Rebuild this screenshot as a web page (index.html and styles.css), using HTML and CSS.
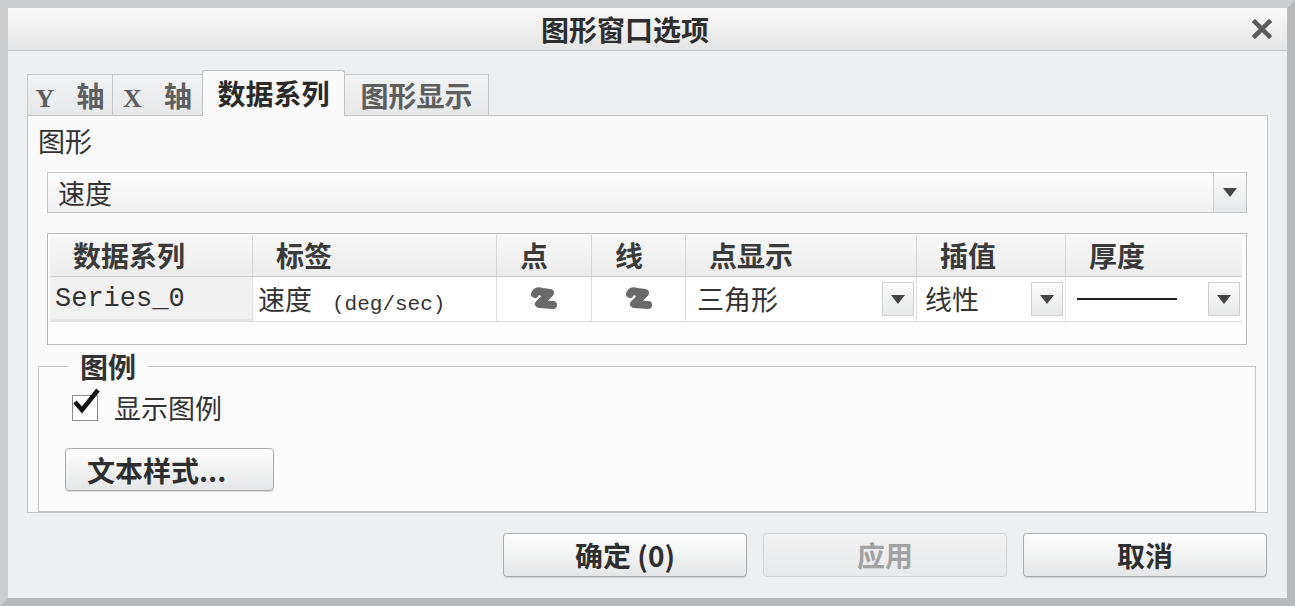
FILE: index.html
```html
<!DOCTYPE html>
<html lang="zh-CN">
<head>
    <meta charset="UTF-8">
    <title>图形窗口选项</title>
    <link rel="stylesheet" href="styles.css">
</head>
<body>
    <div class="dialog">
        <div class="titlebar">
            <span class="title">图形窗口选项</span>
            <span class="close">
                <svg width="20" height="20" viewBox="0 0 20 20"><path d="M3 3 L17 17 M17 3 L3 17" stroke="#5a5a5a" stroke-width="4.5" stroke-linecap="square"/></svg>
            </span>
        </div>

        <div class="dialog-body">
            <div class="tabs">
                <div class="tab tab-y"><span class="axis">Y</span>轴</div>
                <div class="tab tab-x"><span class="axis">X</span>轴</div>
                <div class="tab tab-active">数据系列</div>
                <div class="tab tab-graph">图形显示</div>
            </div>

            <div class="panel">
                <div class="field-label">图形</div>
                <div class="combo">
                    <span class="combo-text">速度</span>
                    <span class="arrow-btn"><svg width="14" height="9" viewBox="0 0 14 9"><path d="M0 0 L14 0 L7 9 Z" fill="#444"/></svg></span>
                </div>

                <div class="series-table">
                    <div class="row head">
                        <div class="cell">数据系列</div>
                        <div class="cell">标签</div>
                        <div class="cell">点</div>
                        <div class="cell">线</div>
                        <div class="cell">点显示</div>
                        <div class="cell">插值</div>
                        <div class="cell">厚度</div>
                    </div>
                    <div class="row data">
                        <div class="cell name mono">Series_0</div>
                        <div class="cell">速度<span class="mono unit">(deg/sec)</span></div>
                        <div class="cell swatch">
                            <svg width="30" height="24" viewBox="0 0 30 24"><path d="M6 7 Q8 3 13 5 L21 6 L10 17 L24 18" fill="none" stroke="#6a6a6a" stroke-width="8" stroke-linejoin="round" stroke-linecap="round"/></svg>
                        </div>
                        <div class="cell swatch">
                            <svg width="30" height="24" viewBox="0 0 30 24"><path d="M6 7 Q8 3 13 5 L21 6 L10 17 L24 18" fill="none" stroke="#6a6a6a" stroke-width="8" stroke-linejoin="round" stroke-linecap="round"/></svg>
                        </div>
                        <div class="cell pick">
                            <span class="pick-text">三角形</span>
                            <span class="arrow-btn small"><svg width="14" height="9" viewBox="0 0 14 9"><path d="M0 0 L14 0 L7 9 Z" fill="#444"/></svg></span>
                        </div>
                        <div class="cell pick pick-interp">
                            <span class="pick-text">线性</span>
                            <span class="arrow-btn small"><svg width="14" height="9" viewBox="0 0 14 9"><path d="M0 0 L14 0 L7 9 Z" fill="#444"/></svg></span>
                        </div>
                        <div class="cell pick pick-line">
                            <span class="thick-line"></span>
                            <span class="arrow-btn small"><svg width="14" height="9" viewBox="0 0 14 9"><path d="M0 0 L14 0 L7 9 Z" fill="#444"/></svg></span>
                        </div>
                    </div>
                </div>

                <fieldset class="legend-group">
                    <legend>图例</legend>
                    <label class="check">
                        <span class="check-box">
                            <svg width="32" height="30" viewBox="0 0 32 30"><path d="M5 15 L12 23 L28 3" fill="none" stroke="#111" stroke-width="4.5" stroke-linejoin="miter"/></svg>
                        </span>
                        显示图例
                    </label>
                    <button class="btn btn-style">文本样式...</button>
                </fieldset>
            </div>

            <div class="actions">
                <button class="btn btn-action">确定 (0)</button>
                <button class="btn btn-action" disabled>应用</button>
                <button class="btn btn-action">取消</button>
            </div>
        </div>
    </div>
</body>
</html>
```

FILE: styles.css
```css
body {
    margin: 0;
    padding: 0;
    font-family: "Noto Sans CJK SC", "Liberation Sans", sans-serif;
    color: #333;
    background-color: #c8cacc;
}

.dialog {
    width: 1295px;
    height: 606px;
    box-sizing: border-box;
    border: 8px solid #cbcdcf;
    border-right-color: #b8babc;
    border-bottom-color: #b8babc;
    display: flex;
    flex-direction: column;
    background-color: #eeeff0;
}

.titlebar {
    height: 42px;
    flex-shrink: 0;
    display: flex;
    align-items: center;
    justify-content: center;
    padding: 0 15px 0 0;
    background: linear-gradient(#fafafa, #e4e5e6);
    border-bottom: 1px solid #c2c3c4;
    position: relative;
}

.title {
    font-size: 28px;
    font-weight: bold;
    color: #2e2e2e;
    margin-right: 30px;
    line-height: 42px;
}

.close {
    position: absolute;
    right: 15px;
    top: 11px;
    width: 20px;
    height: 20px;
}

.dialog-body {
    flex: 1;
    display: flex;
    flex-direction: column;
    padding: 0 19px 0 19px;
}

.tabs {
    display: flex;
    align-items: flex-end;
    margin-top: 19px;
    height: 45px;
}

.tab {
    height: 41px;
    box-sizing: border-box;
    border: 1px solid #c6c7c8;
    border-bottom: none;
    border-left: none;
    background: linear-gradient(#f1f2f3, #e7e8e9);
    font-size: 28px;
    font-weight: bold;
    color: #5e5e5e;
    line-height: 40px;
    text-align: center;
}

.tab-y {
    width: 86px;
    border-left: 1px solid #c6c7c8;
}

.tab-x {
    width: 90px;
}

.axis {
    font-family: "Liberation Serif", serif;
    font-size: 26px;
    font-weight: bold;
    margin-right: 22px;
}

.tab-active {
    width: 143px;
    line-height: 44px;
    background: #fafafa;
    color: #2a2a2a;
    border-color: #c0c1c2;
    border-left: 1px solid #c0c1c2;
    margin-left: -1px;
    border-radius: 3px 3px 0 0;
    position: relative;
    margin-bottom: -1px;
    height: 46px;
    z-index: 1;
}

.tab-graph {
    width: 144px;
}

.panel {
    height: 398px;
    box-sizing: border-box;
    border: 1px solid #c2c3c4;
    background-color: #fafafa;
    padding: 7px 20px 0 19px;
    display: flex;
    flex-direction: column;
}

.field-label {
    font-size: 27px;
    line-height: 36px;
    margin-left: -9px;
    color: #333;
}

.combo {
    margin-top: 13px;
    height: 41px;
    box-sizing: border-box;
    border: 1px solid #c4c5c6;
    background: linear-gradient(#fdfdfd, #f1f1f2);
    display: flex;
    align-items: stretch;
}

.combo-text {
    flex: 1;
    font-size: 27px;
    line-height: 39px;
    padding-left: 10px;
}

.arrow-btn {
    width: 32px;
    display: flex;
    align-items: center;
    justify-content: center;
    border-left: 1px solid #d0d1d2;
    background: linear-gradient(#fbfbfb, #e8e9ea);
}

.arrow-btn.small {
    height: 34px;
    box-sizing: border-box;
    border: 1px solid #cfd0d1;
    margin-right: 2px;
}

.series-table {
    margin-top: 20px;
    height: 112px;
    box-sizing: border-box;
    border: 1px solid #b9babb;
    padding: 1px 4px 0 2px;
    background-color: #fdfdfd;
}

.row {
    display: grid;
    grid-template-columns: 203px 244px 95px 94px 231px 149px 176px;
}

.row.head {
    height: 42px;
    box-sizing: border-box;
    background: linear-gradient(#f8f8f8, #ececed);
    border-bottom: 1px solid #c9cacb;
}

.row.head .cell {
    font-size: 28px;
    font-weight: bold;
    color: #3a3a3a;
    line-height: 40px;
    padding-left: 23px;
    border-right: 1px solid #d6d7d8;
}

.row.head .cell:last-child {
    border-right: none;
}

.row.data {
    height: 45px;
    box-sizing: border-box;
    background-color: #ffffff;
    border-bottom: 1px solid #dcdddd;
}

.row.data .cell {
    font-size: 27px;
    line-height: 44px;
    padding-left: 5px;
    border-right: 1px solid #dfe0e0;
    white-space: nowrap;
    overflow: hidden;
}

.row.data .cell:last-child {
    border-right: none;
}

.mono {
    font-family: "Liberation Mono", monospace;
    font-size: 22px;
}

.unit {
    font-size: 21px;
    margin-left: 20px;
}

.cell.name {
    background-color: #f1f1f1;
    border-bottom: 2px solid #e6e6e6;
}

.cell.swatch {
    display: flex;
    align-items: center;
    justify-content: center;
    padding-left: 0 !important;
}

.cell.pick {
    display: flex;
    align-items: center;
    justify-content: space-between;
    padding-left: 11px !important;
}

.cell.pick-interp {
    padding-left: 8px !important;
}

.cell.pick-line {
    padding-left: 11px !important;
}

.thick-line {
    width: 100px;
    height: 2px;
    background-color: #222;
}

.legend-group {
    margin: 6px -9px 0 -9px;
    border: 1px solid #c8c9ca;
    border-bottom-color: #c2c3c4;
    padding: 0 0 0 26px;
    flex: 1;
    min-width: 0;
    background-color: #fcfcfc;
}

.legend-group legend {
    font-size: 28px;
    font-weight: bold;
    line-height: 30px;
    padding: 0 12px;
    margin-left: 3px;
    color: #333;
}

.check {
    display: flex;
    align-items: center;
    font-size: 27px;
    line-height: 36px;
    margin-left: 7px;
    margin-top: 9px;
    color: #333;
}

.check-box {
    width: 24px;
    height: 24px;
    border: 1px solid #8a8a8a;
    background: #fff;
    margin-right: 16px;
    position: relative;
}

.check-box svg {
    position: absolute;
    left: -3px;
    top: -9px;
}

.btn {
    font-family: "Noto Sans CJK SC", "Liberation Sans", sans-serif;
    font-weight: bold;
    font-size: 28px;
    color: #2e2e2e;
    border: 1px solid #a9aaab;
    border-radius: 4px;
    background: linear-gradient(#fefefe, #e5e6e7);
    box-shadow: 0 1px 1px rgba(0, 0, 0, 0.15);
    padding: 0;
    cursor: pointer;
}

.btn-style {
    display: block;
    width: 209px;
    height: 43px;
    margin-top: 22px;
    text-align: left;
    padding-left: 21px;
    line-height: 40px;
}

.actions {
    display: flex;
    justify-content: flex-end;
    gap: 16px;
    margin-top: 20px;
    padding-right: 1px;
}

.btn-action {
    width: 244px;
    height: 44px;
    line-height: 40px;
}

.btn-action:disabled {
    color: #a2a2a2;
    border-color: #d2d3d4;
    background: linear-gradient(#f2f2f3, #e8e9ea);
    box-shadow: none;
    cursor: default;
}
```
